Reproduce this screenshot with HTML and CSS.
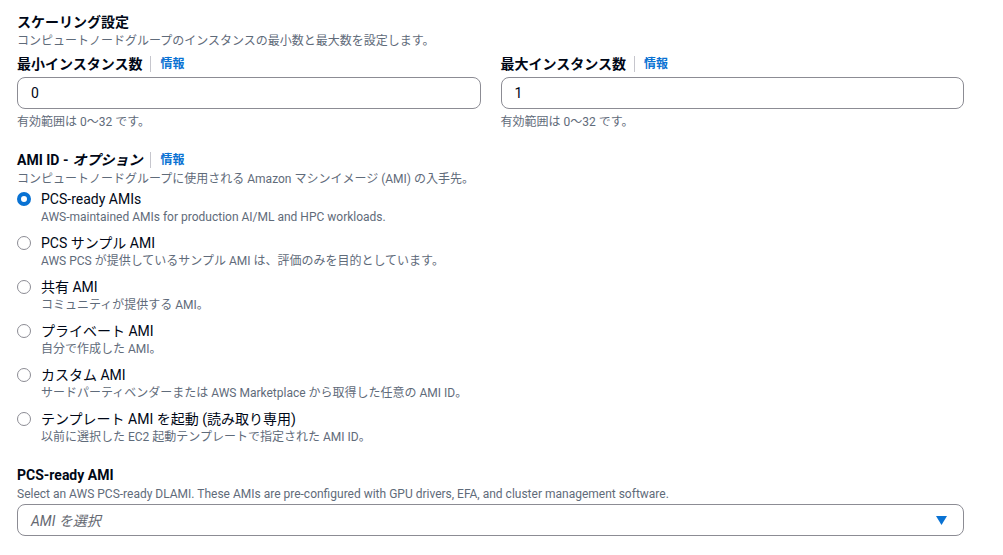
FILE: index.html
```html
<!DOCTYPE html>
<html lang="ja">
<head>
    <meta charset="UTF-8">
    <title>スケーリング設定</title>
    <link rel="stylesheet" href="styles.css">
</head>
<body>
<div class="page">
    <div class="section">
        <div class="heading">スケーリング設定</div>
        <div class="desc">コンピュートノードグループのインスタンスの最小数と最大数を設定します。</div>
        <div class="columns">
            <div class="field">
                <div class="label">最小インスタンス数<span class="sep"></span><a class="info">情報</a></div>
                <div class="input">0</div>
                <div class="help">有効範囲は 0〜32 です。</div>
            </div>
            <div class="field">
                <div class="label">最大インスタンス数<span class="sep"></span><a class="info">情報</a></div>
                <div class="input">1</div>
                <div class="help">有効範囲は 0〜32 です。</div>
            </div>
        </div>
    </div>

    <div class="section">
        <div class="label">AMI ID - <i>オプション</i><span class="sep"></span><a class="info">情報</a></div>
        <div class="desc">コンピュートノードグループに使用される Amazon マシンイメージ (AMI) の入手先。</div>
        <div class="radios">
            <div class="radio">
                <span class="dot checked"></span>
                <div>
                    <div class="radio-label">PCS-ready AMIs</div>
                    <div class="radio-desc">AWS-maintained AMIs for production AI/ML and HPC workloads.</div>
                </div>
            </div>
            <div class="radio">
                <span class="dot"></span>
                <div>
                    <div class="radio-label">PCS サンプル AMI</div>
                    <div class="radio-desc">AWS PCS が提供しているサンプル AMI は、評価のみを目的としています。</div>
                </div>
            </div>
            <div class="radio">
                <span class="dot"></span>
                <div>
                    <div class="radio-label">共有 AMI</div>
                    <div class="radio-desc">コミュニティが提供する AMI。</div>
                </div>
            </div>
            <div class="radio">
                <span class="dot"></span>
                <div>
                    <div class="radio-label">プライベート AMI</div>
                    <div class="radio-desc">自分で作成した AMI。</div>
                </div>
            </div>
            <div class="radio">
                <span class="dot"></span>
                <div>
                    <div class="radio-label">カスタム AMI</div>
                    <div class="radio-desc">サードパーティベンダーまたは AWS Marketplace から取得した任意の AMI ID。</div>
                </div>
            </div>
            <div class="radio">
                <span class="dot"></span>
                <div>
                    <div class="radio-label">テンプレート AMI を起動 (読み取り専用)</div>
                    <div class="radio-desc">以前に選択した EC2 起動テンプレートで指定された AMI ID。</div>
                </div>
            </div>
        </div>
    </div>

    <div class="section">
        <div class="label">PCS-ready AMI</div>
        <div class="desc">Select an AWS PCS-ready DLAMI. These AMIs are pre-configured with GPU drivers, EFA, and cluster management software.</div>
        <div class="select">
            <span class="placeholder">AMI を選択</span>
            <svg width="11" height="9" viewBox="0 0 11 9"><polygon points="0,0 11,0 5.5,9" fill="#0972d3"/></svg>
        </div>
    </div>
</div>
</body>
</html>
```

FILE: styles.css
```css
body {
    margin: 0;
    font-family: Roboto, "Noto Sans CJK JP", sans-serif;
    color: #000716;
    background-color: #ffffff;
}
.page {
    width: 947px;
    padding: 11px 0 0 17px;
}
.section {
    margin-bottom: 19px;
}
.heading {
    font-size: 14px;
    font-weight: bold;
    line-height: 22px;
}
.desc {
    font-size: 12px;
    line-height: 16px;
    color: #5f6b7a;
}
.columns {
    display: grid;
    grid-template-columns: 1fr 1fr;
    gap: 20px;
}
.label {
    font-size: 14px;
    font-weight: bold;
    line-height: 22px;
    display: flex;
    align-items: center;
}
.field .label {
    margin-top: 4px;
}
.label i {
    margin-left: 4px;
}
.sep {
    display: inline-block;
    width: 1px;
    height: 16px;
    background-color: #c6c6cd;
    margin: 0 9px 0 8px;
}
.info {
    color: #0972d3;
    font-size: 12px;
    font-weight: bold;
}
.input {
    margin-top: 2px;
    height: 30px;
    border: 1px solid #8c8c94;
    border-radius: 8px;
    padding: 0 13px;
    font-size: 14px;
    line-height: 30px;
}
.help {
    margin-top: 5px;
    font-size: 12px;
    line-height: 16px;
    color: #5f6b7a;
}
.radios {
    display: flex;
    flex-direction: column;
    gap: 8px;
    margin-top: 2px;
}
.radio {
    display: flex;
    gap: 10px;
}
.dot {
    flex: none;
    width: 12px;
    height: 12px;
    margin-top: 3px;
    border: 1px solid #8c8c94;
    border-radius: 50%;
}
.dot.checked {
    width: 6px;
    height: 6px;
    border: 4px solid #0972d3;
}
.radio-label {
    font-size: 14px;
    line-height: 20px;
}
.radio-desc {
    font-size: 12px;
    line-height: 16px;
    color: #5f6b7a;
}
.select {
    margin-top: 2px;
    height: 30px;
    border: 1px solid #8c8c94;
    border-radius: 8px;
    padding: 0 16px 0 13px;
    display: flex;
    align-items: center;
    justify-content: space-between;
}
.placeholder {
    font-size: 14px;
    font-style: italic;
    color: #656871;
}
```
